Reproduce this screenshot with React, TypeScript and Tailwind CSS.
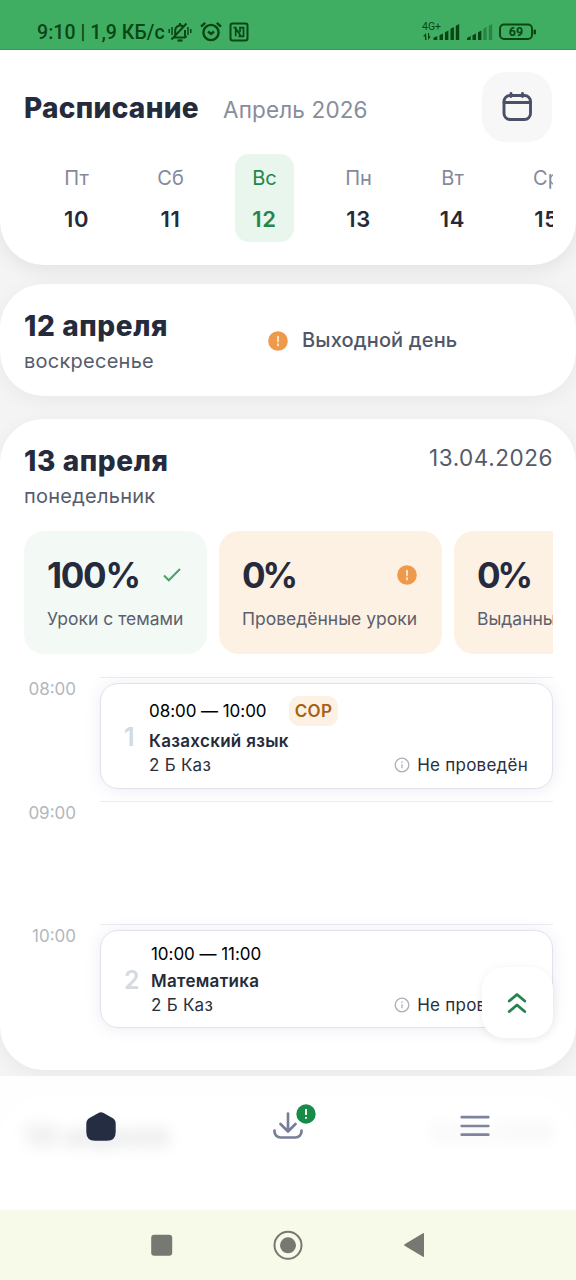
import type { ReactNode } from "react";

type Day = { name: string; date: number };

const DAYS: Day[] = [
  { name: "Пт", date: 10 },
  { name: "Сб", date: 11 },
  { name: "Вс", date: 12 },
  { name: "Пн", date: 13 },
  { name: "Вт", date: 14 },
  { name: "Ср", date: 15 },
];

const SELECTED_DATE = 12;

function StatusBar() {
  return (
    <div className="flex h-[50px] shrink-0 items-end justify-between border-b border-[#37965a] bg-[#40ae62] pr-[39px] pb-[5px] pl-[37px] font-['Roboto',sans-serif] text-[#0b4516]">
      <div className="flex h-6 items-center">
        <span className="w-[128px] pt-px text-[19.5px] leading-6 font-medium tracking-[0.05px] whitespace-nowrap">9:10 | 1,9 КБ/с</span>
        <svg className="ml-[3px]" width="24" height="22" viewBox="0 0 24 22" fill="none" stroke="currentColor" strokeWidth="2">
          <path d="M6 16.500h11.500M7.200 15.500V9.500A5 5 0 0 1 15 5.300M17 9v5.500l1.500 2M12 2v2M3.500 18.500 18.500 2.500" />
          <path d="M9.500 19.500h5" strokeWidth="2.200" />
          <path d="M1.200 8v4M4 6v8M20 6v8M22.800 8v4" strokeWidth="1.500" />
        </svg>
        <svg className="ml-[7px]" width="24" height="22" viewBox="0 0 24 22" fill="none" stroke="currentColor" strokeWidth="2.400">
          <circle cx="12" cy="11.500" r="7.600" />
          <path d="m2 5.700 4.200-3.900M22 5.700l-4.200-3.900M9 10.500l3 2.500 3-2.500" />
        </svg>
        <svg className="ml-[6px]" width="20" height="20" viewBox="0 0 20 20" fill="none" stroke="currentColor" strokeWidth="2">
          <rect x="1.500" y="1.500" width="17" height="17" rx="2" />
          <path d="M4.500 5.700h2.200v8.600M6.500 6l5 7.500M9.500 14.300h5V5.700h-3.500v4.500" strokeWidth="1.700" />
        </svg>
      </div>
      <div className="flex h-6 items-center">
        <svg width="40" height="22" viewBox="-1 0 40 22" fill="currentColor">
          <text x="-1" y="8.500" fontSize="10.500" fontFamily="Roboto">4G+</text>
          <path d="m3 12-3 3.500h2V19h1.500zM5 19l2.800-3.500H6.200V12H5z" />
          <path d="M10.500 16.800 14.300 15v4h-3.800zM16.500 14.200l3.500-1.700V19h-3.500zM22 11.200l3.400-1.700V19H22zM27.500 7.700 30.900 6v13h-3.400zM32.800 4.700 36.200 3v16h-3.400z" />
        </svg>
        <svg className="ml-[5px]" width="26" height="22" viewBox="0 0 26 22" fill="currentColor">
          <path d="M0 17l3.700-2v4H0zM5.500 14.200 9 12.500V19H5.500zM11 11.200l3.400-1.700V19H11z" />
          <path d="M16.300 7.700 19.700 6v13h-3.400zM21.800 4.700 25.200 3v16h-3.400z" opacity=".4" />
        </svg>
        <svg className="ml-[6px]" width="38" height="18" viewBox="0 0 38 18">
          <rect x="1" y="1.500" width="32" height="14.500" rx="4" fill="none" stroke="currentColor" strokeWidth="1.900" />
          <rect x="34.500" y="6.500" width="2.500" height="5" rx="1" fill="currentColor" />
          <text x="17" y="13.300" textAnchor="middle" fontSize="12.500" fontWeight="700" fontFamily="Roboto" fill="currentColor">69</text>
        </svg>
      </div>
    </div>
  );
}

function WarnIcon() {
  return (
    <svg width="20" height="20" viewBox="0 0 20 20">
      <circle cx="10" cy="10" r="9.800" fill="#ee9a4a" />
      <path d="M10 5.500v5M10 13.200v1.300" stroke="#fff3e4" strokeWidth="1.700" strokeLinecap="round" />
    </svg>
  );
}

function InfoIcon() {
  return (
    <svg width="16" height="16" viewBox="0 0 16 16" fill="none" stroke="#acb0b8" strokeWidth="1.300">
      <circle cx="8" cy="8" r="6.800" />
      <path d="M8 7.300v4M8 4.600V6" />
    </svg>
  );
}

function DayCell({ day }: { day: Day }) {
  const active = day.date === SELECTED_DATE;
  return (
    <button
      type="button"
      className={`flex h-[88px] w-[59px] shrink-0 flex-col items-center rounded-[14px] pt-3 ${
        active ? "bg-[#e9f6ed] text-[#23864c]" : "text-[#252a39]"
      }`}
    >
      <span className={`text-[20px] leading-6 ${active ? "" : "text-[#848a9a]"}`}>{day.name}</span>
      <span className="mt-[15px] text-[22px] leading-7 font-semibold tracking-[0.7px]">{day.date}</span>
    </button>
  );
}

function Header() {
  return (
    <header className="relative h-[215px] shrink-0 rounded-b-[44px] bg-white px-6 pt-[22px] shadow-[0_4px_20px_rgba(0,0,0,0.08)]">
      <div className="flex h-[70px] items-center">
        <h1 className="w-[199px] pt-0.5 text-[28px] font-extrabold tracking-[0.3px]">Расписание</h1>
        <span className="pt-1.5 text-[22.500px] tracking-[0.15px] text-[#888d9b]">Апрель 2026</span>
        <button type="button" className="ml-auto flex size-[70px] items-center justify-center rounded-[24px] bg-[#f7f7f8]">
          <svg width="32" height="32" viewBox="0 0 32 32" fill="none" stroke="#4a5068" strokeWidth="2.900" strokeLinecap="round">
            <rect x="3" y="4.500" width="26.500" height="24" rx="6" />
            <path d="M3 11.500h26.500M10 2.500v3M21.500 2.500v3" />
          </svg>
        </button>
      </div>
      <div className="mt-3 -mr-px flex gap-[35px] overflow-hidden pl-[23px]">
        {DAYS.map((day) => (
          <DayCell key={day.date} day={day} />
        ))}
      </div>
    </header>
  );
}

function DayTitle({ title, weekday }: { title: string; weekday: string }) {
  return (
    <div>
      <h2 className="text-[28px] leading-9 font-extrabold tracking-[0.600px]">{title}</h2>
      <p className="text-[20px] leading-[34px] tracking-[0.25px] text-[#565c6b]">{weekday}</p>
    </div>
  );
}

type StatProps = {
  value: string;
  label: string;
  className: string;
  icon?: ReactNode;
};

function Stat({ value, label, className, icon }: StatProps) {
  return (
    <div className={`h-[123px] shrink-0 rounded-[20px] px-[23px] pt-6 ${className}`}>
      <div className="flex h-10 items-center justify-between">
        <span className={`text-[35px] leading-10 font-bold ${value.length > 2 ? "tracking-[-1.300px]" : "tracking-[-3px]"}`}>{value}</span>
        {icon}
      </div>
      <p className="mt-3 text-[17.500px] leading-6 text-[#5c606c]">{label}</p>
    </div>
  );
}

type Lesson = { index: number; time: string; subject: string; group: string; status: string; tag?: string };

function LessonCard({ lesson }: { lesson: Lesson }) {
  return (
    <div
      className={`mt-[5px] flex items-center rounded-[18px] border border-[#e1e2ee] bg-white pr-6 pl-[23px] shadow-[0_1px_16px_rgba(80,80,160,0.1)] ${
        lesson.tag ? "h-[106px]" : "h-[98px]"
      }`}
    >
      <span className={`pt-1 text-[25px] font-semibold text-[#d5dae1] ${lesson.tag ? "w-[25px]" : "w-[27px]"}`}>{lesson.index}</span>
      <div className="flex-1 text-[17px] leading-6 tracking-[0.250px] text-[#2a2f3d]">
        <div className={`mb-[3px] flex items-center text-black ${lesson.tag ? "h-[30px]" : "h-6"}`}>
          <span className="w-[140px] tracking-[-0.050px]">{lesson.time}</span>
          {lesson.tag ? (
            <span className="flex h-[30px] w-[49px] items-center justify-center rounded-[10px] bg-[#fdf1e4] font-semibold text-[#a86014]">
              {lesson.tag}
            </span>
          ) : null}
        </div>
        <p className="font-semibold tracking-[0.300px] text-[#252b3a]">{lesson.subject}</p>
        <div className="flex items-center justify-between">
          <span>{lesson.group}</span>
          <span className="flex items-center gap-[7px]">
            <InfoIcon />
            {lesson.status}
          </span>
        </div>
      </div>
    </div>
  );
}

const HOURS: { hour: string; lesson?: Lesson }[] = [
  {
    hour: "08:00",
    lesson: { index: 1, time: "08:00 — 10:00", subject: "Казахский язык", group: "2 Б Каз", status: "Не проведён", tag: "СОР" },
  },
  { hour: "09:00" },
  {
    hour: "10:00",
    lesson: { index: 2, time: "10:00 — 11:00", subject: "Математика", group: "2 Б Каз", status: "Не проведён" },
  },
];

function Timeline() {
  return (
    <div className="mt-[23px]">
      {HOURS.map(({ hour, lesson }) => (
        <div key={hour} className="flex h-[123.500px] gap-6">
          <span className="w-[52px] text-right text-[17px] leading-6 text-[#b2b7be]">{hour}</span>
          <div className="-mr-px flex-1 border-t border-[#ebebf2]">{lesson ? <LessonCard lesson={lesson} /> : null}</div>
        </div>
      ))}
    </div>
  );
}

function BottomNav() {
  return (
    <nav className="absolute inset-x-0 bottom-0 flex h-[134px] items-start bg-white/85 px-[7.500px] pt-[34px] backdrop-blur-[8px]">
      <button type="button" className="flex flex-1 justify-center">
        <svg width="32" height="32" viewBox="0 0 32 32" fill="#252d43">
          <path d="M13.400 3.100Q16 1.500 18.600 3.100L27.500 8Q30.700 10 30.700 13.500V22Q30.700 30.700 22 30.700H10Q1.300 30.700 1.300 22V13.500Q1.300 10 4.500 8Z" />
        </svg>
      </button>
      <button type="button" className="relative flex flex-1 justify-center">
        <svg width="32" height="32" viewBox="0 0 32 32" fill="none" stroke="#777e98" strokeWidth="2.700" strokeLinecap="round" strokeLinejoin="round">
          <path d="M16 3.500v17M8.500 14l7.500 7.500 7.500-7.500M2.500 20.500v1a6 6 0 0 0 6 6h15a6 6 0 0 0 6-6v-1" />
        </svg>
        <span className="absolute top-[-6px] left-[101px]">
          <svg width="20" height="20" viewBox="0 0 20 20">
            <circle cx="10" cy="10" r="9.700" fill="#178b47" />
            <path d="M10 5v6M10 13v1.800" stroke="#fff" strokeWidth="1.900" />
          </svg>
        </span>
      </button>
      <button type="button" className="flex flex-1 justify-center">
        <svg width="32" height="32" viewBox="0 0 32 32" stroke="#7f849d" strokeWidth="2.700" strokeLinecap="round">
          <path d="M2.700 7.200h26.600M2.700 16h26.600M2.700 24.700h26.600" />
        </svg>
      </button>
    </nav>
  );
}

function SystemBar() {
  return (
    <div className="flex h-[70px] shrink-0 items-center justify-center gap-[100px] bg-[#f7fae8] text-[#767872]">
      <svg width="22" height="22" viewBox="0 0 22 22" fill="currentColor">
        <rect x=".2" y=".8" width="21" height="21" rx="3" />
      </svg>
      <svg width="30" height="30" viewBox="0 0 30 30">
        <circle cx="15" cy="15.300" r="13.500" fill="none" stroke="currentColor" strokeWidth="2" />
        <circle cx="15" cy="15.300" r="8" fill="currentColor" />
      </svg>
      <svg width="22" height="26" viewBox="0 0 22 26" fill="currentColor">
        <path d="M20 1.200q1-.6 1 .8v22q0 1.400-1 .8L1.600 13.800q-1-.8 0-1.600z" />
      </svg>
    </div>
  );
}

export default function App() {
  return (
    <div className="flex h-[1280px] w-[576px] flex-col overflow-hidden bg-[#f4f4f4] font-['Inter',sans-serif] whitespace-nowrap text-[#252b3d]">
      <StatusBar />
      <div className="relative flex h-[1160px] flex-col overflow-hidden">
        <Header />
        <section className="mt-[19px] flex h-[112px] shrink-0 rounded-[44px] bg-white px-6 pt-6 shadow-[0_4px_20px_rgba(0,0,0,0.05)]">
          <div className="w-[244px]">
            <DayTitle title="12 апреля" weekday="воскресенье" />
          </div>
          <div className="flex h-[65px] items-center gap-[14px] text-[20px] font-medium tracking-[0.150px] text-[#50566a]">
            <WarnIcon />
            <span className="-mt-px">Выходной день</span>
          </div>
        </section>
        <section className="mt-[23px] h-[651px] shrink-0 rounded-[44px] bg-white px-6 pt-6 shadow-[0_4px_20px_rgba(0,0,0,0.05)]">
          <div className="flex justify-between">
            <DayTitle title="13 апреля" weekday="понедельник" />
            <span className="-mr-px text-[22.500px] leading-[30px] tracking-[0.550px] text-[#555b6a]">13.04.2026</span>
          </div>
          <div className="mt-[18px] -mr-px flex gap-3 overflow-hidden">
            <Stat
              value="100%"
              label="Уроки с темами"
              className="w-[183px] bg-[#f3faf6]"
              icon={
                <svg className="mr-[3px]" width="18" height="16" viewBox="0 0 18 16" fill="none" stroke="#4ba068" strokeWidth="2">
                  <path d="m1 8.500 4.800 4.800L17 2" />
                </svg>
              }
            />
            <Stat
              value="0%"
              label="Проведённые уроки"
              className="w-[223px] bg-[#fdf1e4]"
              icon={
                <span className="mr-0.5">
                  <WarnIcon />
                </span>
              }
            />
            <Stat value="0%" label="Выданные задания" className="w-[223px] bg-[#fdf1e4]" />
          </div>
          <Timeline />
        </section>
        <section className="mt-6 flex h-[300px] shrink-0 justify-between rounded-[44px] bg-white px-6 pt-6 shadow-[0_4px_20px_rgba(0,0,0,0.05)]">
          <DayTitle title="14 апреля" weekday="" />
          <span className="-mr-px text-[22.500px] leading-[30px] tracking-[0.550px] text-[#555b6a]">14.04.2026</span>
        </section>
        <button
          type="button"
          className="absolute right-[23px] bottom-[172px] flex size-[71px] items-center justify-center rounded-[22px] bg-white pr-px shadow-[0_2px_10px_rgba(0,0,0,0.07)]"
        >
          <svg width="20" height="22" viewBox="0 0 20 22" fill="none" stroke="#238450" strokeWidth="2.900" strokeLinecap="round" strokeLinejoin="round">
            <path d="m2.300 9 7.700-6.500L17.700 9M2.300 19.500 10 13l7.700 6.500" />
          </svg>
        </button>
        <BottomNav />
      </div>
      <SystemBar />
    </div>
  );
}
